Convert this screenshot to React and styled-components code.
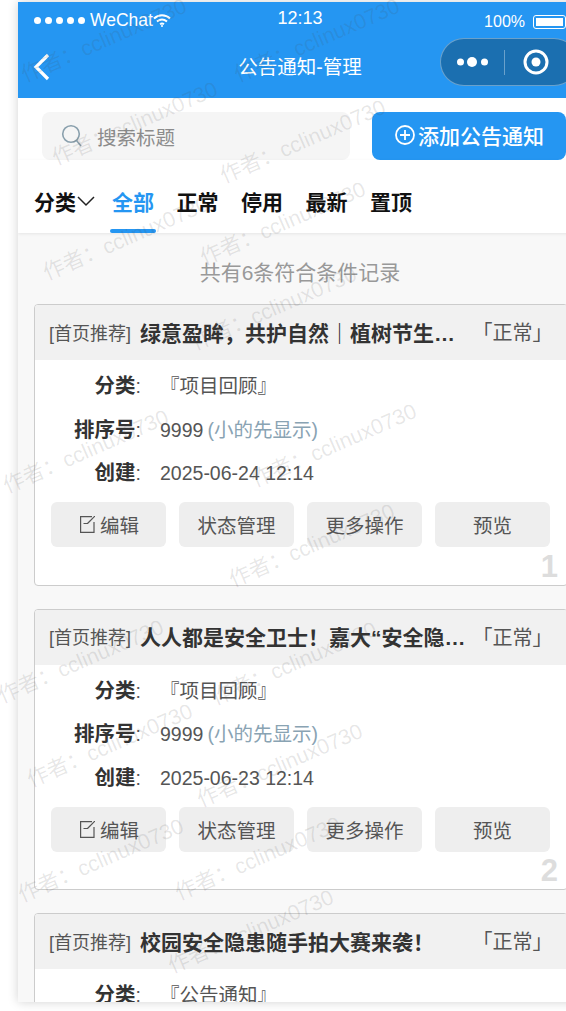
import React from "react";
import styled, { createGlobalStyle } from "styled-components";

const Global = createGlobalStyle`
  html, body { margin: 0; padding: 0; background: #fff; overflow: hidden; height: 100%; }
  body { font-family: "Liberation Sans", "Noto Sans CJK SC", sans-serif; }
  * { box-sizing: border-box; }
`;

const Stage = styled.div`
  position: relative;
  width: 566px;
  height: 1011px;
  overflow: hidden;
  padding: 2px 0 0 18px;
`;
const Phone = styled.div`
  width: 564px;
  height: 1000px;
  overflow: hidden;
  background: #f8f8f8;
  box-shadow: 0 0 10px rgba(0, 0, 0, 0.18);
`;
const Header = styled.header`
  background: #2596f2;
  color: #fff;
`;
const StatusBar = styled.div`
  height: 36px;
  display: grid;
  grid-template-columns: 1fr auto 1fr;
  align-items: center;
`;
const StatusLeft = styled.div`
  display: flex;
  align-items: center;
  padding-left: 16px;
`;
const Dots = styled.div`
  display: flex;
  gap: 4px;
  margin-right: 5px;
`;
const Dot = styled.i`
  width: 7px;
  height: 7px;
  border-radius: 50%;
  background: #fff;
`;
const Carrier = styled.span`
  font-size: 17.5px;
`;
const Clock = styled.span`
  font-size: 18px;
  margin-top: -3px;
`;
const StatusRight = styled.div`
  display: flex;
  align-items: center;
  justify-content: flex-end;
  margin-top: 4px;
  margin-right: 16px;
  gap: 8px;
  font-size: 16px;
`;
const Battery = styled.div`
  width: 33px;
  height: 14px;
  border: 1.5px solid #fff;
  border-radius: 3px;
  padding: 2px;
  &::before {
    content: "";
    display: block;
    height: 100%;
    background: #fff;
  }
`;
const NavBar = styled.div`
  height: 60px;
  display: grid;
  grid-template-columns: minmax(0, 1fr) auto minmax(0, 1fr);
`;
const Back = styled.div`
  align-self: center;
  margin-top: -2px;
  padding-left: 14px;
  line-height: 0;
`;
const NavTitle = styled.div`
  align-self: center;
  margin-top: -6px;
  font-size: 19.5px;
`;
const Capsule = styled.div`
  justify-self: end;
  width: 138px;
  height: 48px;
  margin-right: 4px;
  border: 1px solid rgba(255, 255, 255, 0.35);
  border-radius: 24px;
  background: #1b6fb0;
  display: flex;
  align-items: center;
  padding-left: 16px;
`;
const CapsuleDivider = styled.i`
  width: 1px;
  height: 25px;
  background: rgba(255, 255, 255, 0.35);
  margin: 0 18px 0 16px;
`;
const SearchRow = styled.div`
  display: flex;
  gap: 22px;
  padding: 14px 16px 0 24px;
  background: #fff;
`;
const SearchBox = styled.div`
  width: 308px;
  height: 48px;
  border-radius: 8px;
  background: #f5f5f5;
  display: flex;
  align-items: center;
  padding-left: 19px;
  gap: 14px;
  font-size: 19.5px;
  color: #8c8c8c;
`;
const AddButton = styled.div`
  width: 194px;
  height: 48px;
  border-radius: 8px;
  background: #2596f2;
  color: #fff;
  font-size: 21px;
  font-weight: 500;
  display: flex;
  align-items: center;
  padding: 0 0 2px 23px;
  gap: 3px;
`;
const TabBar = styled.nav`
  height: 73px;
  background: #fff;
  display: flex;
  padding-left: 16px;
  gap: 22.5px;
  box-shadow: 0 1px 3px rgba(0, 0, 0, 0.08);
  position: relative;
`;
const Tab = styled.div`
  position: relative;
  display: flex;
  align-items: center;
  padding: 13px 0 4px;
  font-size: 21px;
  font-weight: 700;
  color: ${(p) => (p.$active ? "#2596f2" : "#111")};
  margin-right: ${(p) => (p.$first ? "-6.5px" : "0")};
  &::after {
    content: "";
    display: ${(p) => (p.$active ? "block" : "none")};
    position: absolute;
    left: -2px;
    right: -2px;
    bottom: 0;
    height: 4px;
    border-radius: 2px;
    background: #2596f2;
  }
`;
const Count = styled.div`
  padding: 26px 0 17px;
  text-align: center;
  font-size: 21px;
  line-height: 28px;
  color: #999;
`;
const Card = styled.article`
  position: relative;
  margin: 0 14px 23px 16px;
  height: 281.5px;
  border: 1px solid #ccc;
  border-radius: 4px;
  background: #fff;
  overflow: hidden;
`;
const CardHead = styled.div`
  height: 55px;
  background: #f1f1f1;
  display: flex;
  align-items: center;
  padding: 0 14.5px 2px 14px;
`;
const Tag = styled.span`
  font-size: 18px;
  color: #555;
  flex: none;
`;
const Title = styled.span`
  flex: 1;
  min-width: 0;
  margin: 0 4px 0 9px;
  font-size: 21px;
  font-weight: 700;
  color: #333;
  white-space: nowrap;
  overflow: hidden;
  text-overflow: ellipsis;
`;
const Status = styled.span`
  flex: none;
  font-size: 20px;
  color: #555;
`;
const Rows = styled.div`
  padding-top: 4px;
`;
const Row = styled.div`
  height: 43.5px;
  line-height: 43.5px;
  display: flex;
  align-items: baseline;
  font-size: 19.5px;
  color: #555;
`;
const Label = styled.div`
  width: 106px;
  text-align: right;
  margin-right: 19px;
  color: #555;
  flex: none;
`;
const LabelText = styled.b`
  color: #333;
  font-size: 20.5px;
`;
const Note = styled.span`
  color: #89a3b3;
  margin-left: 4px;
`;
const Actions = styled.div`
  display: flex;
  gap: 13px;
  margin-top: 7.5px;
  padding-left: 16px;
`;
const ActionButton = styled.div`
  width: 115px;
  height: 45px;
  border-radius: 6px;
  background: #eee;
  display: flex;
  align-items: center;
  justify-content: center;
  gap: 5px;
  font-size: 19.5px;
  color: #555;
`;
const EditGlyph = styled.svg`
  margin-left: 2px;
`;
const Index = styled.div`
  position: absolute;
  right: 9px;
  bottom: 0;
  font-size: 31px;
  font-weight: 700;
  color: #ddd;
`;
const WatermarkLayer = styled.div`
  position: absolute;
  inset: 0;
  pointer-events: none;
`;
const Watermark = styled.div`
  position: absolute;
  left: ${(p) => p.$x + 4}px;
  top: ${(p) => p.$y - 19}px;
  line-height: 24px;
  font-size: 21.5px;
  white-space: nowrap;
  color: rgba(70, 70, 70, 0.13);
  transform-origin: 0 100%;
  transform: rotate(-23.5deg);
`;

const cards = [
  { title: "绿意盈眸，共护自然｜植树节生态回顾活动", cat: "『项目回顾』", date: "2025-06-24 12:14", n: 1 },
  { title: "人人都是安全卫士！嘉大“安全隐患排查”活动", cat: "『项目回顾』", date: "2025-06-23 12:14", n: 2 },
  { title: "校园安全隐患随手拍大赛来袭！", cat: "『公告通知』", date: "2025-06-22 12:14", n: 3 },
];
const marks = [
  [23, 82], [236, 82], [54, 165], [222, 183], [45, 280], [202, 265], [193, 350], [5, 493], [253, 487],
  [231, 587], [0, 703], [213, 705], [29, 787], [199, 807], [20, 902], [177, 900], [170, 973],
];
const tabs = ["全部", "正常", "停用", "最新", "置顶"];

const EditIcon = () => (
  <EditGlyph width="15" height="17" viewBox="0 0 15 17" fill="none" stroke="#555" strokeWidth="1.2">
    <path d="M12 .6H.6V16.4H14V6" />
    <path d="M15 0L7.5 7.5" />
    <path d="M3.5 7.5H8" />
  </EditGlyph>
);

export default function App() {
  return (
    <Stage>
      <Global />
      <Phone>
        <Header>
          <StatusBar>
            <StatusLeft>
              <Dots>
                {[0, 1, 2, 3, 4].map((i) => (
                  <Dot key={i} />
                ))}
              </Dots>
              <Carrier>WeChat</Carrier>
              <svg width="18" height="14" viewBox="0 0 18 14" fill="none" stroke="#fff" strokeWidth="2">
                <path d="M1 5.5C5.5 1 12.5 1 17 5.5" />
                <path d="M4 8.5C7 6 11 6 14 8.5" />
                <path d="M7 11.2C8.2 10.4 9.8 10.4 11 11.2" />
                <circle cx="9" cy="13" r="1" fill="#fff" stroke="none" />
              </svg>
            </StatusLeft>
            <Clock>12:13</Clock>
            <StatusRight>
              <span>100%</span>
              <Battery />
            </StatusRight>
          </StatusBar>
          <NavBar>
            <Back>
              <svg width="20" height="28" viewBox="0 0 20 28" fill="none" stroke="#fff" strokeWidth="3.2">
                <path d="M16 2L4 14L16 26" />
              </svg>
            </Back>
            <NavTitle>公告通知-管理</NavTitle>
            <Capsule>
              <svg width="31" height="12" viewBox="0 0 31 12" fill="#fff">
                <circle cx="3.5" cy="6" r="3.5" />
                <circle cx="15" cy="6" r="5" />
                <circle cx="27.5" cy="6" r="3.5" />
              </svg>
              <CapsuleDivider />
              <svg width="26" height="26" viewBox="0 0 26 26" fill="none" stroke="#fff" strokeWidth="3">
                <circle cx="13" cy="13" r="11" />
                <circle cx="13" cy="13" r="4.5" fill="#fff" stroke="none" />
              </svg>
            </Capsule>
          </NavBar>
        </Header>
        <SearchRow>
          <SearchBox>
            <svg width="22" height="24" viewBox="0 0 22 24" fill="none" stroke="#8aa0ad" strokeWidth="1.6">
              <circle cx="10" cy="10" r="8.3" />
              <path d="M15.5 16.5L20 22" />
            </svg>
            搜索标题
          </SearchBox>
          <AddButton>
            <svg width="20" height="20" viewBox="0 0 20 20" fill="none" stroke="#fff" strokeWidth="1.8">
              <circle cx="10" cy="10" r="9" />
              <path d="M5 10H15M10 5V15" />
            </svg>
            添加公告通知
          </AddButton>
        </SearchRow>
        <TabBar>
          <Tab $first>
            分类
            <svg width="20" height="12" viewBox="0 0 20 12" fill="none" stroke="#222" strokeWidth="1.5">
              <path d="M2 2L10 10L18 2" />
            </svg>
          </Tab>
          {tabs.map((t, i) => (
            <Tab key={t} $active={i === 0}>
              {t}
            </Tab>
          ))}
        </TabBar>
        <Count>共有6条符合条件记录</Count>
        {cards.map((c) => (
          <Card key={c.n}>
            <CardHead>
              <Tag>[首页推荐]</Tag>
              <Title>{c.title}</Title>
              <Status>「正常」</Status>
            </CardHead>
            <Rows>
              <Row>
                <Label>
                  <LabelText>分类</LabelText>:
                </Label>
                {c.cat}
              </Row>
              <Row>
                <Label>
                  <LabelText>排序号</LabelText>:
                </Label>
                9999<Note>(小的先显示)</Note>
              </Row>
              <Row>
                <Label>
                  <LabelText>创建</LabelText>:
                </Label>
                {c.date}
              </Row>
            </Rows>
            <Actions>
              <ActionButton>
                <EditIcon />
                编辑
              </ActionButton>
              <ActionButton>状态管理</ActionButton>
              <ActionButton>更多操作</ActionButton>
              <ActionButton>预览</ActionButton>
            </Actions>
            <Index>{c.n}</Index>
          </Card>
        ))}
      </Phone>
      <WatermarkLayer>
        {marks.map(([x, y]) => (
          <Watermark key={`${x}-${y}`} $x={x} $y={y}>
            作者：cclinux0730
          </Watermark>
        ))}
      </WatermarkLayer>
    </Stage>
  );
}
